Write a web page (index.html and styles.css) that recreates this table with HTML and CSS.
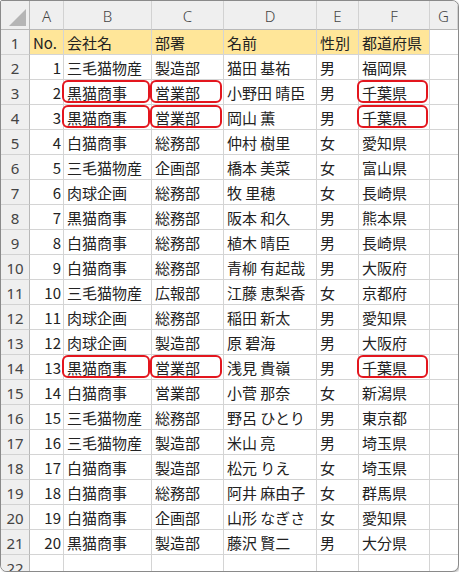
FILE: index.html
```html
<!DOCTYPE html>
<html lang="ja">
<head>
<meta charset="utf-8">
<link rel="stylesheet" href="styles.css">
</head>
<body>
<div class="sheet">
  <div class="ch corner"><span class="tri"></span></div><div class="ch">A</div><div class="ch">B</div><div class="ch">C</div><div class="ch">D</div><div class="ch">E</div><div class="ch">F</div><div class="ch last">G</div>

  <div class="rh">1</div><div class="c y">No.</div><div class="c y">会社名</div><div class="c y">部署</div><div class="c y">名前</div><div class="c y">性別</div><div class="c y">都道府県</div><div class="c last"></div>
  <div class="rh">2</div><div class="c n">1</div><div class="c">三毛猫物産</div><div class="c">製造部</div><div class="c">猫田 基祐</div><div class="c">男</div><div class="c">福岡県</div><div class="c last"></div>
  <div class="rh">3</div><div class="c n">2</div><div class="c hl">黒猫商事</div><div class="c hl">営業部</div><div class="c">小野田 晴臣</div><div class="c">男</div><div class="c hl">千葉県</div><div class="c last"></div>
  <div class="rh">4</div><div class="c n">3</div><div class="c hl">黒猫商事</div><div class="c hl">営業部</div><div class="c">岡山 薫</div><div class="c">男</div><div class="c hl">千葉県</div><div class="c last"></div>
  <div class="rh">5</div><div class="c n">4</div><div class="c">白猫商事</div><div class="c">総務部</div><div class="c">仲村 樹里</div><div class="c">女</div><div class="c">愛知県</div><div class="c last"></div>
  <div class="rh">6</div><div class="c n">5</div><div class="c">三毛猫物産</div><div class="c">企画部</div><div class="c">橋本 美菜</div><div class="c">女</div><div class="c">富山県</div><div class="c last"></div>
  <div class="rh">7</div><div class="c n">6</div><div class="c">肉球企画</div><div class="c">総務部</div><div class="c">牧 里穂</div><div class="c">女</div><div class="c">長崎県</div><div class="c last"></div>
  <div class="rh">8</div><div class="c n">7</div><div class="c">黒猫商事</div><div class="c">総務部</div><div class="c">阪本 和久</div><div class="c">男</div><div class="c">熊本県</div><div class="c last"></div>
  <div class="rh">9</div><div class="c n">8</div><div class="c">白猫商事</div><div class="c">総務部</div><div class="c">植木 晴臣</div><div class="c">男</div><div class="c">長崎県</div><div class="c last"></div>
  <div class="rh">10</div><div class="c n">9</div><div class="c">白猫商事</div><div class="c">総務部</div><div class="c">青柳 有起哉</div><div class="c">男</div><div class="c">大阪府</div><div class="c last"></div>
  <div class="rh">11</div><div class="c n">10</div><div class="c">三毛猫物産</div><div class="c">広報部</div><div class="c">江藤 恵梨香</div><div class="c">女</div><div class="c">京都府</div><div class="c last"></div>
  <div class="rh">12</div><div class="c n">11</div><div class="c">肉球企画</div><div class="c">総務部</div><div class="c">稲田 新太</div><div class="c">男</div><div class="c">愛知県</div><div class="c last"></div>
  <div class="rh">13</div><div class="c n">12</div><div class="c">肉球企画</div><div class="c">製造部</div><div class="c">原 碧海</div><div class="c">男</div><div class="c">大阪府</div><div class="c last"></div>
  <div class="rh">14</div><div class="c n">13</div><div class="c hl">黒猫商事</div><div class="c hl">営業部</div><div class="c">浅見 貴嶺</div><div class="c">男</div><div class="c hl">千葉県</div><div class="c last"></div>
  <div class="rh">15</div><div class="c n">14</div><div class="c">白猫商事</div><div class="c">営業部</div><div class="c">小菅 那奈</div><div class="c">女</div><div class="c">新潟県</div><div class="c last"></div>
  <div class="rh">16</div><div class="c n">15</div><div class="c">三毛猫物産</div><div class="c">総務部</div><div class="c">野呂 ひとり</div><div class="c">男</div><div class="c">東京都</div><div class="c last"></div>
  <div class="rh">17</div><div class="c n">16</div><div class="c">三毛猫物産</div><div class="c">製造部</div><div class="c">米山 亮</div><div class="c">男</div><div class="c">埼玉県</div><div class="c last"></div>
  <div class="rh">18</div><div class="c n">17</div><div class="c">白猫商事</div><div class="c">製造部</div><div class="c">松元 りえ</div><div class="c">女</div><div class="c">埼玉県</div><div class="c last"></div>
  <div class="rh">19</div><div class="c n">18</div><div class="c">白猫商事</div><div class="c">総務部</div><div class="c">阿井 麻由子</div><div class="c">女</div><div class="c">群馬県</div><div class="c last"></div>
  <div class="rh">20</div><div class="c n">19</div><div class="c">白猫商事</div><div class="c">企画部</div><div class="c">山形 なぎさ</div><div class="c">女</div><div class="c">愛知県</div><div class="c last"></div>
  <div class="rh">21</div><div class="c n">20</div><div class="c">黒猫商事</div><div class="c">製造部</div><div class="c">藤沢 賢二</div><div class="c">男</div><div class="c">大分県</div><div class="c last"></div>
  <div class="rh">22</div><div class="c"></div><div class="c"></div><div class="c"></div><div class="c"></div><div class="c"></div><div class="c"></div><div class="c last"></div>
</div>
</body>
</html>
```
FILE: styles.css
```css
* { box-sizing: border-box; }
html, body { margin: 0; padding: 0; background: #ffffff; }
.sheet {
  width: 459px;
  height: 572px;
  border: 1px solid #8a8a8a;
  border-radius: 2px 7px 7px 7px;
  overflow: hidden;
  display: grid;
  grid-template-columns: 29px 34px 88px 72px 93px 42px 71px 28px;
  grid-template-rows: 29px repeat(22, 25px);
  font-family: "Noto Sans CJK JP", "Noto Sans", sans-serif;
  font-size: 15px;
  color: #222222;
  background: #ffffff;
  box-shadow: 1px 1px 2px rgba(0,0,0,0.25);
}
.ch {
  background: #efefef;
  border-right: 1px solid #d2d2d2;
  border-bottom: 1px solid #b8b8b8;
  display: flex;
  align-items: center;
  justify-content: center;
  font-family: "Noto Sans", sans-serif;
  font-weight: 300;
  color: #444444;
  font-size: 15px;
  padding-top: 2px;
}
.ch.corner { position: relative; border-right-color: #b8b8b8; }
.tri {
  position: absolute;
  right: 3px;
  bottom: 3px;
  width: 0;
  height: 0;
  border-left: 17px solid transparent;
  border-bottom: 17px solid #b5b5b5;
}
.rh {
  background: #efefef;
  border-right: 1px solid #b8b8b8;
  border-bottom: 1px solid #d2d2d2;
  display: flex;
  align-items: center;
  justify-content: center;
  font-family: "Noto Sans", sans-serif;
  color: #444444;
  font-size: 15px;
  padding-top: 1px;
}
.c {
  position: relative;
  border-right: 1px solid #d4d4d4;
  border-bottom: 1px solid #d4d4d4;
  display: flex;
  align-items: center;
  padding: 1px 0 0 3px;
  white-space: nowrap;
  overflow: visible;
}
.c.last { border-right: none; }
.c.y { background: #ffe699; padding-left: 3px; }
.c.n { justify-content: flex-end; padding-right: 2px; padding-left: 0; }
.hl::after {
  content: "";
  position: absolute;
  top: 0;
  left: -2px;
  right: 1px;
  bottom: 1px;
  border: 2px solid #e3161e;
  border-radius: 6px;
}
```
